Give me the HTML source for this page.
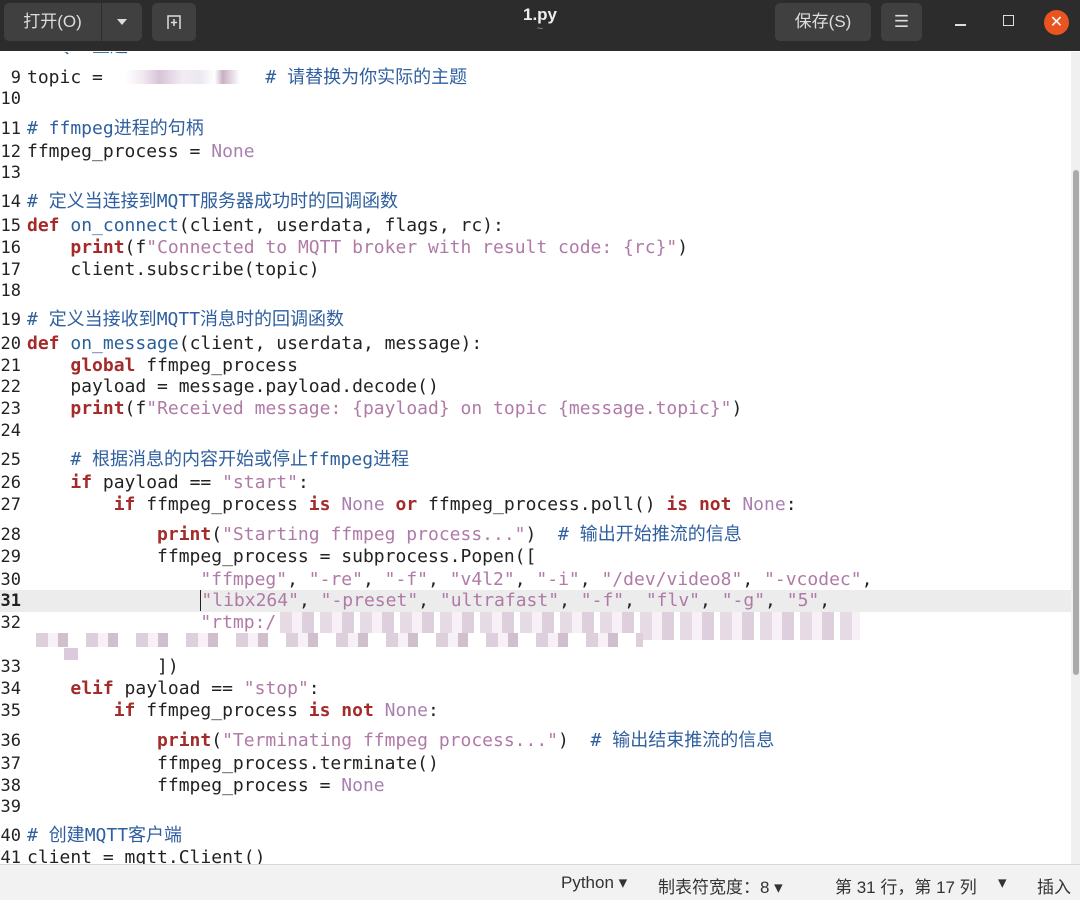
<!DOCTYPE html>
<html><head><meta charset="utf-8"><style>
body{margin:0;width:1080px;height:899px;overflow:hidden;background:#fff;font-family:"Liberation Sans","Noto Sans CJK SC",sans-serif;position:relative}
.hd{position:absolute;left:0;top:0;width:1080px;height:51px;background:#2c2c2c}
.btn{position:absolute;top:3px;height:38px;background:#404040;border-radius:5px;color:#ddd;font-size:17px;line-height:38px;text-align:center}
.ed{position:absolute;left:0;top:52px;width:1080px;height:812px;overflow:hidden}
.l{position:absolute;left:0;height:22px;line-height:22px;font-family:"DejaVu Sans Mono","Noto Sans CJK SC",monospace;font-size:18px;color:#222;white-space:pre}
.n{display:inline-block;width:21px;text-align:right;margin-right:6px;font-size:17px}
.k{color:#a52a2a;font-weight:bold}.s{color:#b07aa6}.c{color:#2f5f9e}.f{color:#2a6099}.nn{color:#a880b0}
.z{font-family:"Noto Sans CJK SC",sans-serif}
.blur{position:absolute;height:14px}
</style></head><body>
<div class="hd">
<div class="btn" style="left:4px;width:97px;border-radius:5px 0 0 5px">打开(O)</div>
<div class="btn" style="left:102px;width:40px;border-radius:0 5px 5px 0"><svg width="14" height="10" style="margin-top:14px" viewBox="0 0 14 10"><path d="M2 2h10l-5 6z" fill="#ddd"/></svg></div>
<div class="btn" style="left:152px;width:44px"><svg width="20" height="20" style="margin-top:9px" viewBox="0 0 20 20"><path d="M4 17V4h12v13M10 7v7M7 10.5h6" stroke="#ddd" stroke-width="1.5" fill="none"/></svg></div>
<div style="position:absolute;left:0;width:1080px;top:5px;text-align:center;color:#eee;font-weight:bold;font-size:17px">1.py</div>
<div style="position:absolute;left:0;width:1080px;top:23px;text-align:center;color:#999;font-size:11px">~</div>
<div class="btn" style="left:775px;width:96px">保存(S)</div>
<div class="btn" style="left:881px;width:41px">☰</div>
<div style="position:absolute;left:955px;top:24px;width:11px;height:2px;background:#ddd"></div>
<div style="position:absolute;left:1003px;top:15px;width:9px;height:9px;border:1.5px solid #ddd"></div>
<div style="position:absolute;left:1044px;top:10px;width:25px;height:25px;border-radius:50%;background:#e95420;color:#fff;text-align:center;line-height:25px;font-size:16px">✕</div>
</div>
<div class="ed">
<div style="position:absolute;left:0;top:538px;width:1072px;height:22px;background:#ececec"></div>
<div style="position:absolute;left:1071px;top:0;width:9px;height:812px;background:#f0f0f0"></div>
<div style="position:absolute;left:1073px;top:118px;width:6px;height:505px;background:#aaa;border-radius:3px"></div>
<div class="l" style="top:-18px"><span class="n"></span><span class="c"># MQTT<span class="z">主题</span></span></div>
</div>
<div id="code"></div>
<div class="blur" style="left:125px;top:70px;width:115px;background:linear-gradient(90deg,#fff 0,#f2eaf2 15%,#d8c4d8 30%,#f2ecf2 50%,#ece8f0 65%,#fff 78%,#c8b0c4 85%,#fff 100%)"></div>
<div class="blur" style="left:280px;top:612px;width:580px;height:28px;background:repeating-linear-gradient(90deg,#e6dae4 0 12px,#f7f0f7 12px 22px,#ddcfdc 22px 34px,#fff 34px 40px)"></div>
<div class="blur" style="left:28px;top:633px;width:615px;height:14px;background:repeating-linear-gradient(90deg,#fff 0 8px,#ddcfdc 8px 20px,#f7f0f7 20px 30px,#d0c0ce 30px 40px,#fff 40px 50px)"></div>
<div class="blur" style="left:64px;top:648px;width:14px;height:12px;background:#dccadc"></div>
<script>
var L=[
[76,9,'topic =               <span class="c"># <span class="z">请替换为你实际的主题</span></span>'],
[99,10,''],
[127,11,'<span class="c"># ffmpeg<span class="z">进程的句柄</span></span>'],
[152,12,'ffmpeg_process = <span class="nn">None</span>'],
[173,13,''],
[200,14,'<span class="c"># <span class="z">定义当连接到</span>MQTT<span class="z">服务器成功时的回调函数</span></span>'],
[226,15,'<span class="k">def</span> <span class="f">on_connect</span>(client, userdata, flags, rc):'],
[248,16,'    <span class="k">print</span>(f<span class="s">"Connected to MQTT broker with result code: {rc}"</span>)'],
[270,17,'    client.subscribe(topic)'],
[291,18,''],
[318,19,'<span class="c"># <span class="z">定义当接收到</span>MQTT<span class="z">消息时的回调函数</span></span>'],
[344,20,'<span class="k">def</span> <span class="f">on_message</span>(client, userdata, message):'],
[366,21,'    <span class="k">global</span> ffmpeg_process'],
[387,22,'    payload = message.payload.decode()'],
[409,23,'    <span class="k">print</span>(f<span class="s">"Received message: {payload} on topic {message.topic}"</span>)'],
[431,24,''],
[458,25,'    <span class="c"># <span class="z">根据消息的内容开始或停止</span>ffmpeg<span class="z">进程</span></span>'],
[483,26,'    <span class="k">if</span> payload == <span class="s">"start"</span>:'],
[505,27,'        <span class="k">if</span> ffmpeg_process <span class="k">is</span> <span class="nn">None</span> <span class="k">or</span> ffmpeg_process.poll() <span class="k">is not</span> <span class="nn">None</span>:'],
[533,28,'            <span class="k">print</span>(<span class="s">"Starting ffmpeg process..."</span>)  <span class="c"># <span class="z">输出开始推流的信息</span></span>'],
[557,29,'            ffmpeg_process = subprocess.Popen(['],
[580,30,'                <span class="s">"ffmpeg"</span>, <span class="s">"-re"</span>, <span class="s">"-f"</span>, <span class="s">"v4l2"</span>, <span class="s">"-i"</span>, <span class="s">"/dev/video8"</span>, <span class="s">"-vcodec"</span>,'],
[601,'<b>31</b>','                <span style="border-left:1.5px solid #222"></span><span class="s">"libx264"</span>, <span class="s">"-preset"</span>, <span class="s">"ultrafast"</span>, <span class="s">"-f"</span>, <span class="s">"flv"</span>, <span class="s">"-g"</span>, <span class="s">"5"</span>,'],
[623,32,'                <span class="s">"rtmp:/</span>'],
[667,33,'            ])'],
[689,34,'    <span class="k">elif</span> payload == <span class="s">"stop"</span>:'],
[711,35,'        <span class="k">if</span> ffmpeg_process <span class="k">is not</span> <span class="nn">None</span>:'],
[739,36,'            <span class="k">print</span>(<span class="s">"Terminating ffmpeg process..."</span>)  <span class="c"># <span class="z">输出结束推流的信息</span></span>'],
[764,37,'            ffmpeg_process.terminate()'],
[786,38,'            ffmpeg_process = <span class="nn">None</span>'],
[807,39,''],
[834,40,'<span class="c"># <span class="z">创建</span>MQTT<span class="z">客户端</span></span>'],
[858,41,'client = mqtt.Client()']];
var h='';L.forEach(function(a){h+='<div class="l" style="top:'+(a[0]-11)+'px"><span class="n">'+a[1]+'</span>'+a[2]+'</div>';});
document.getElementById('code').innerHTML=h;
</script>
<div style="position:absolute;left:0;top:864px;width:1080px;height:35px;background:#f2f2f2;border-top:1px solid #d6d6d6;font-size:17px;color:#333">
<span style="position:absolute;top:8px;left:561px">Python ▾</span>
<span style="position:absolute;top:8px;left:658px">制表符宽度：8 ▾</span>
<span style="position:absolute;top:8px;left:835px">第 31 行，第 17 列</span>
<span style="position:absolute;top:8px;left:998px">▾</span>
<span style="position:absolute;top:8px;left:1037px">插入</span>
</div>
</body></html>
